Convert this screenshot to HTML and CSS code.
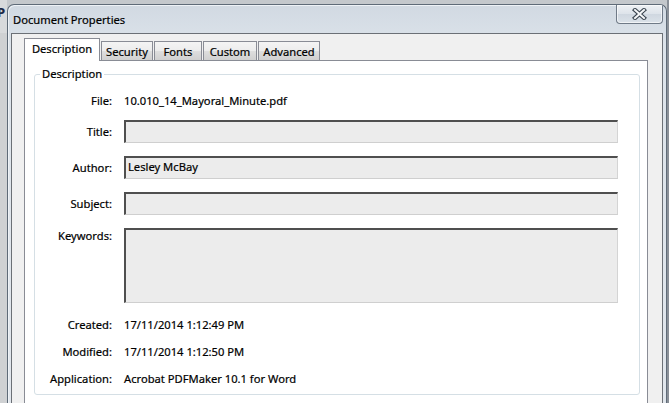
FILE: index.html
```html
<!DOCTYPE html>
<html>
<head>
<meta charset="utf-8">
<link rel="stylesheet" href="styles.css">
</head>
<body>
<div class="desk">
  <div class="bg-left">
    <span class="frag-p">P</span>
  </div>
  <div class="dialog">
    <div class="titlebar">
      <span class="title">Document Properties</span>
      <div class="close">
        <svg width="15" height="12" viewBox="0 0 15 12">
          <path d="M3 2 L12 10 M12 2 L3 10" stroke="#3b4550" stroke-width="4.2" stroke-linecap="square" fill="none"/>
          <path d="M3 2 L12 10 M12 2 L3 10" stroke="#f4f6f8" stroke-width="2" stroke-linecap="square" fill="none"/>
        </svg>
      </div>
    </div>
    <div class="panel">
      <div class="tabs">
        <div class="tab active w-desc">Description</div>
        <div class="tab w-sec">Security</div>
        <div class="tab w-fonts">Fonts</div>
        <div class="tab w-custom">Custom</div>
        <div class="tab w-adv">Advanced</div>
      </div>
      <div class="tabpanel">
        <fieldset class="group">
          <legend>Description</legend>
          <div class="row row-file"><span class="lbl">File:</span><span class="val">10.010_14_Mayoral_Minute.pdf</span></div>
          <div class="row row-field"><span class="lbl">Title:</span><div class="input"></div></div>
          <div class="row row-field"><span class="lbl">Author:</span><div class="input">Lesley McBay</div></div>
          <div class="row row-field"><span class="lbl">Subject:</span><div class="input"></div></div>
          <div class="row row-kw"><span class="lbl lbl-top">Keywords:</span><div class="input input-tall"></div></div>
          <div class="row row-info"><span class="lbl">Created:</span><span class="val">17/11/2014 1:12:49 PM</span></div>
          <div class="row row-info"><span class="lbl">Modified:</span><span class="val">17/11/2014 1:12:50 PM</span></div>
          <div class="row row-info"><span class="lbl">Application:</span><span class="val">Acrobat PDFMaker 10.1 for Word</span></div>
        </fieldset>
      </div>
    </div>
  </div>
  <div class="bg-right">
    <span class="frag frag-il">il</span>
    <span class="frag frag-r">r</span>
    <span class="frag frag-x">x</span>
    <span class="frag frag-f">F</span>
    <span class="frag frag-1">1</span>
    <span class="frag frag-t">T</span>
    <span class="frag frag-c">c</span>
    <span class="frag frag-ze">ze</span>
  </div>
</div>
</body>
</html>
```
FILE: styles.css
```css
html, body {
  margin: 0;
  padding: 0;
}
body {
  width: 669px;
  height: 403px;
  overflow: hidden;
  background: #c4c8cc;
  font-family: "Noto Sans", "Open Sans", sans-serif;
  font-size: 11.2px;
  color: #000;
  -webkit-text-stroke: 0.2px #000;
}
.desk {
  display: flex;
  height: 403px;
  overflow: hidden;
}
.bg-left {
  flex: 0 0 7px;
  background: linear-gradient(to bottom, #d8dadc 0, #d8dadc 33px, #cfd1d3 33px);
  overflow: hidden;
}
.frag-p {
  display: block;
  margin: 4px 0 0 -3px;
  font-weight: bold;
  font-size: 13px;
  line-height: 16px;
  color: #1c2a4a;
}
.dialog {
  flex: 0 0 652px;
  margin-top: 4px;
  border: 1px solid #5f6b78;
  border-bottom: 0;
  border-radius: 7px 7px 0 0;
  background: linear-gradient(to bottom, #d1d9e2 0, #dce3ea 40px, #e1e6ec 100%);
  padding: 0 3px 0 3px;
  display: flex;
  flex-direction: column;
  box-shadow: inset 1px 1px 0 #eef2f6;
  overflow: hidden;
}
.titlebar {
  flex: 0 0 28px;
  display: flex;
  justify-content: space-between;
  align-items: flex-start;
}
.title {
  margin-top: 7px;
  margin-left: 2px;
  line-height: 16px;
  color: #000;
}
.close {
  width: 45px;
  height: 18px;
  border: 1px solid #6f7a87;
  border-top: 0;
  border-radius: 0 0 4px 4px;
  background: linear-gradient(to bottom, #eef1f4 0, #dde3ea 50%, #cfd7e0 51%, #dbe2e9 100%);
  display: flex;
  align-items: center;
  justify-content: center;
  box-shadow: inset 0 0 0 1px rgba(255,255,255,0.6);
}
.close svg {
  display: block;
  margin-top: -1px;
}
.panel {
  flex: 1 0 auto;
  background: #f0f0f0;
  border: 1px solid #6b7076;
  border-bottom: 0;
  padding: 4px 14px 0 12px;
  display: flex;
  flex-direction: column;
}
.tabs {
  display: flex;
  align-items: flex-end;
  flex: 0 0 22px;
}
.tab {
  box-sizing: border-box;
  height: 19px;
  border: 1px solid #898c95;
  border-bottom: 0;
  background: linear-gradient(to bottom, #f4f4f4 0, #ececec 50%, #dedede 51%, #d0d0d0 100%);
  text-align: center;
  line-height: 19px;
  margin-right: 1px;
  color: #000;
}
.tab.active {
  height: 23px;
  margin-bottom: -1px;
  background: #fff;
  line-height: 20px;
  position: relative;
  z-index: 1;
  padding-bottom: 3px;
}
.w-desc { width: 76px; }
.w-sec { width: 52px; }
.w-fonts { width: 48px; }
.w-custom { width: 54px; }
.w-adv { width: 62px; }
.tabpanel {
  flex: 1 0 auto;
  background: #fff;
  border: 1px solid #898c95;
  border-bottom: 0;
  padding: 0 7px 20px 9px;
}
.group {
  margin: 6px 0 0 0;
  padding: 8px 0 2px 0;
  border: 1px solid #d5dfe5;
  border-radius: 3px;
  min-inline-size: 0;
}
.group legend {
  margin-left: 5px;
  padding: 0 2px;
  line-height: 14px;
}
.row {
  display: grid;
  grid-template-columns: 77px 494px;
  column-gap: 12px;
  align-items: center;
}
.lbl {
  text-align: right;
  line-height: 16px;
}
.val {
  line-height: 16px;
}
.row-file {
  height: 23px;
  margin-bottom: 8px;
}
.row-field {
  margin-bottom: 13px;
}
.row-kw {
  align-items: start;
  margin-bottom: 8px;
}
.lbl-top {
  padding-top: 0;
}
.row-info {
  height: 27px;
}
.input {
  box-sizing: border-box;
  height: 23px;
  background: #ececec;
  border-top: 2px solid #4f4f4f;
  border-left: 2px solid #4f4f4f;
  border-right: 1px solid #d4d4d4;
  border-bottom: 1px solid #cfcfcf;
  padding: 0 2px;
  line-height: 18px;
}
.input-tall {
  height: 75px;
}
.bg-right {
  flex: 1;
  background: #eeeeee;
  border-left: 2px solid #8a9098;
  display: flex;
  flex-direction: column;
  overflow: hidden;
  font-size: 11px;
  line-height: 12px;
  -webkit-text-stroke: 0;
}
.frag {
  display: block;
  margin-left: 1px;
  white-space: nowrap;
}
.frag-il { margin-top: 56px; font-weight: bold; color: #14204a; }
.frag-r { margin-top: 37px; font-weight: bold; font-size: 13px; color: #222; }
.frag-x { margin-top: 17px; font-weight: bold; color: #222; }
.frag-f { margin-top: 34px; color: #1a4fa0; }
.frag-1 { margin-top: 12px; color: #222; }
.frag-t { margin-top: 46px; color: #222; font-size: 13px; }
.frag-c { margin-top: 8px; color: #222; }
.frag-ze { margin-top: 38px; color: #222; margin-left: -1px; }
```
